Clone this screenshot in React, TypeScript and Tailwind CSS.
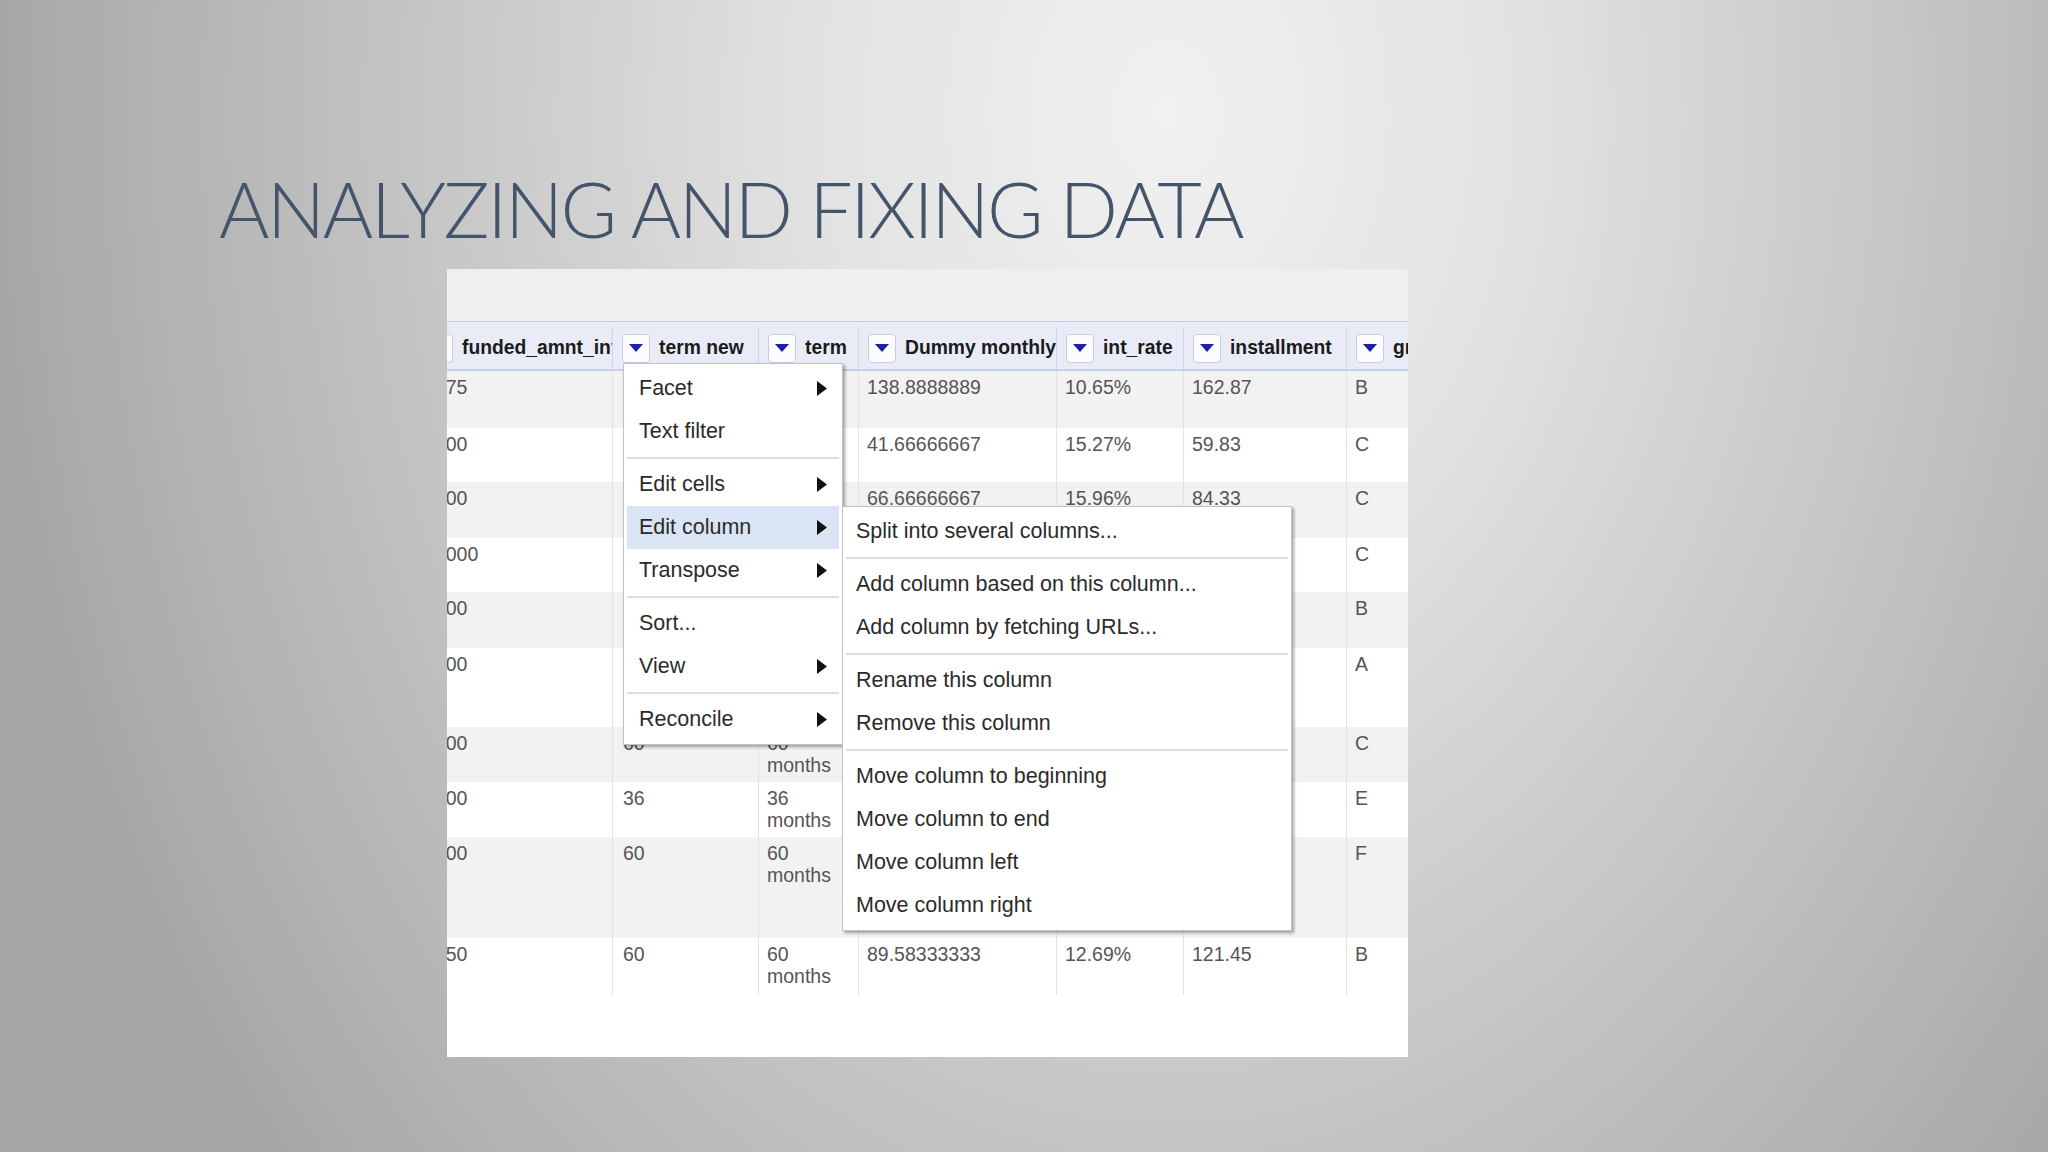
const COLS = [
  { w: 'w-[197px]', pad: 'px-[8px]', title: 'funded_amnt_inv' },
  { w: 'w-[146px]', pad: 'pl-[10px] pr-[8px]', title: 'term new' },
  { w: 'w-[100px]', pad: 'px-[8px]', title: 'term' },
  { w: 'w-[198px]', pad: 'px-[8px]', title: 'Dummy monthly' },
  { w: 'w-[127px]', pad: 'px-[8px]', title: 'int_rate' },
  { w: 'w-[163px]', pad: 'px-[8px]', title: 'installment' },
  { w: 'w-[120px]', pad: 'px-[8px]', title: 'grade' },
];

const ROWS: { h: string; cells: string[] }[] = [
  { h: 'h-[57px]', cells: ['4975', '36', '36 months', '138.8888889', '10.65%', '162.87', 'B'] },
  { h: 'h-[54px]', cells: ['2500', '60', '60 months', '41.66666667', '15.27%', '59.83', 'C'] },
  { h: 'h-[56px]', cells: ['2400', '36', '36 months', '66.66666667', '15.96%', '84.33', 'C'] },
  { h: 'h-[54px]', cells: ['10000', '36', '36 months', '277.7777778', '13.49%', '339.31', 'C'] },
  { h: 'h-[56px]', cells: ['3000', '60', '60 months', '50', '12.69%', '67.79', 'B'] },
  { h: 'h-[79px]', cells: ['5000', '36', '36 months', '138.8888889', '7.90%', '156.46', 'A'] },
  { h: 'h-[55px]', cells: ['7000', '60', '60 months', '116.6666667', '15.96%', '170.08', 'C'] },
  { h: 'h-[55px]', cells: ['3000', '36', '36 months', '83.33333333', '18.64%', '109.43', 'E'] },
  { h: 'h-[101px]', cells: ['5600', '60', '60 months', '93.33333333', '21.28%', '152.39', 'F'] },
  { h: 'h-[57px]', cells: ['5350', '60', '60 months', '89.58333333', '12.69%', '121.45', 'B'] },
];

function DropButton() {
  return (
    <div className="ml-[9px] flex h-[29px] w-[28px] shrink-0 items-center justify-center rounded-[4px] border border-[#c9cde4] bg-[#fcfcff]">
      <svg width="14" height="8" viewBox="0 0 14 8">
        <polygon points="0,0 14,0 7,8" fill="#1f1fa8" />
      </svg>
    </div>
  );
}

function Arrow() {
  return (
    <svg width="10" height="15" viewBox="0 0 10 15">
      <polygon points="0,0 10,7.5 0,15" fill="#111" />
    </svg>
  );
}

type Item = { label: string; sub?: boolean; active?: boolean } | 'sep';

function Menu({ items, className, pad }: { items: Item[]; className: string; pad: string }) {
  return (
    <div className={`absolute bg-white border border-[#c2c2c2] p-[3px] shadow-[2px_2px_3px_rgba(0,0,0,0.35)] ${className}`}>
      {items.map((it, i) =>
        it === 'sep' ? (
          <div key={i} className="flex h-[10px] items-center">
            <div className="h-[2px] w-full bg-[#dddddd]" />
          </div>
        ) : (
          <div
            key={i}
            className={`flex h-[43px] items-center justify-between pr-[12px] text-[21.5px] text-[#2b2b2b] ${pad} ${it.active ? 'bg-[#d9e5f5]' : ''}`}
          >
            <span className="whitespace-nowrap">{it.label}</span>
            {it.sub && <Arrow />}
          </div>
        )
      )}
    </div>
  );
}

const MAIN: Item[] = [
  { label: 'Facet', sub: true },
  { label: 'Text filter' },
  'sep',
  { label: 'Edit cells', sub: true },
  { label: 'Edit column', sub: true, active: true },
  { label: 'Transpose', sub: true },
  'sep',
  { label: 'Sort...' },
  { label: 'View', sub: true },
  'sep',
  { label: 'Reconcile', sub: true },
];

const SUB: Item[] = [
  { label: 'Split into several columns...' },
  'sep',
  { label: 'Add column based on this column...' },
  { label: 'Add column by fetching URLs...' },
  'sep',
  { label: 'Rename this column' },
  { label: 'Remove this column' },
  'sep',
  { label: 'Move column to beginning' },
  { label: 'Move column to end' },
  { label: 'Move column left' },
  { label: 'Move column right' },
];

export default function App() {
  return (
    <div className="h-[1152px] w-[2048px] overflow-hidden bg-[radial-gradient(ellipse_58%_140%_at_57%_10%,#f1f1f1_0%,#e2e2e2_30%,#c6c6c6_62%,#a6a6a6_100%)]">
      <h1 className="pl-[219px] pt-[170px] text-[77px] font-light leading-none tracking-[-2.4px] text-[#44546a] [font-family:Lato,'Open_Sans',sans-serif]">
        ANALYZING AND FIXING DATA
      </h1>

      <div className="relative ml-[447px] mt-[22px] h-[788px] w-[961px] overflow-hidden bg-white [font-family:'Liberation_Sans',Arial,sans-serif]">
        <div className="h-[52px] bg-[#efeff0]" />

        <div className="-ml-[31px]">
          {/* header row */}
          <div className="flex h-[50px] border-y border-b-2 border-[#c8cde8] bg-[#e9ebf7] pt-[5px]">
            {COLS.map((c) => (
              <div key={c.title} className={`flex h-full shrink-0 items-center overflow-hidden border-r border-[#d2d6ec] ${c.w}`}>
                <DropButton />
                <span className="ml-[9px] whitespace-nowrap text-[19.3px] font-bold text-[#1b1b1b]">{c.title}</span>
              </div>
            ))}
          </div>

          {ROWS.map((r, i) => (
            <div key={i} className={`flex ${r.h} ${i % 2 === 0 ? 'bg-[#f2f2f2]' : 'bg-white'}`}>
              {COLS.map((c, j) => (
                <div
                  key={j}
                  className={`h-full shrink-0 overflow-hidden border-r border-[#e2e2e2] pt-[5px] text-[19.5px] leading-[22px] text-[#555555] ${c.pad} ${c.w}`}
                >
                  {r.cells[j]}
                </div>
              ))}
            </div>
          ))}
        </div>

        <Menu items={MAIN} className="left-[176px] top-[94px] z-10 w-[220px]" pad="pl-[12px]" />
        <Menu items={SUB} className="left-[395px] top-[237px] z-20 w-[450px]" pad="pl-[10px]" />
      </div>
    </div>
  );
}
